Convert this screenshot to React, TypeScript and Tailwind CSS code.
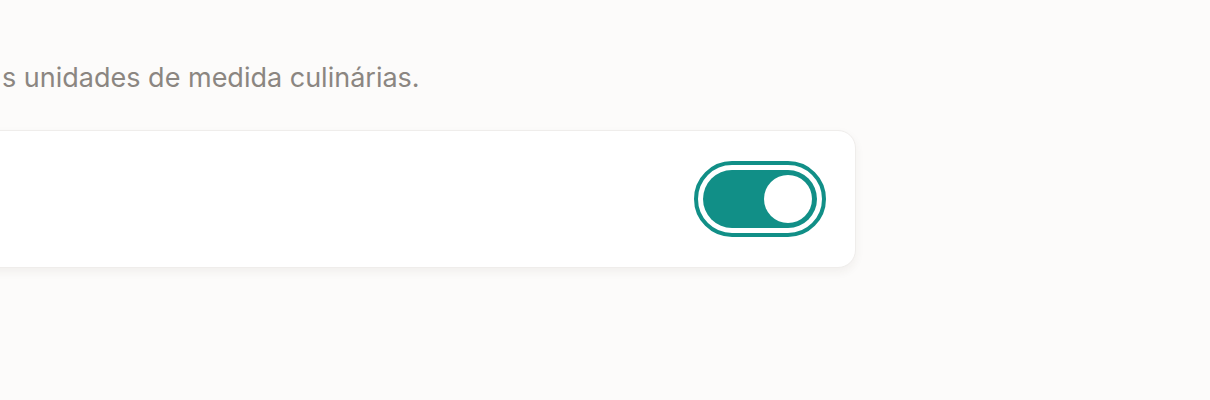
import React from "react";

export default function App() {
  return (
    <div
      className="w-[1210px] h-[400px] overflow-hidden bg-[#fcfbfa]"
      style={{ fontFamily: "Inter, 'Noto Sans', sans-serif" }}
    >
      <div className="pt-[62px] -ml-[24px] w-[880px]">
        <p className="pl-[26px] text-[27px] leading-[32px] text-[#8b8681]">
          s unidades de medida culinárias.
        </p>
        <div className="mt-[36px] h-[138px] rounded-[18px] border border-[#efedeb] bg-white shadow-[0_4px_10px_rgba(60,50,40,0.06)] flex items-center justify-end pr-[38px]">
          <button
            role="switch"
            aria-checked="true"
            className="w-[114px] h-[58px] rounded-full bg-[#118f87] outline-[4px] outline-solid outline-[#118f87] outline-offset-[5px] flex items-center justify-end pr-[5px]"
          >
            <span className="w-[48px] h-[48px] rounded-full bg-white block" />
          </button>
        </div>
      </div>
    </div>
  );
}
